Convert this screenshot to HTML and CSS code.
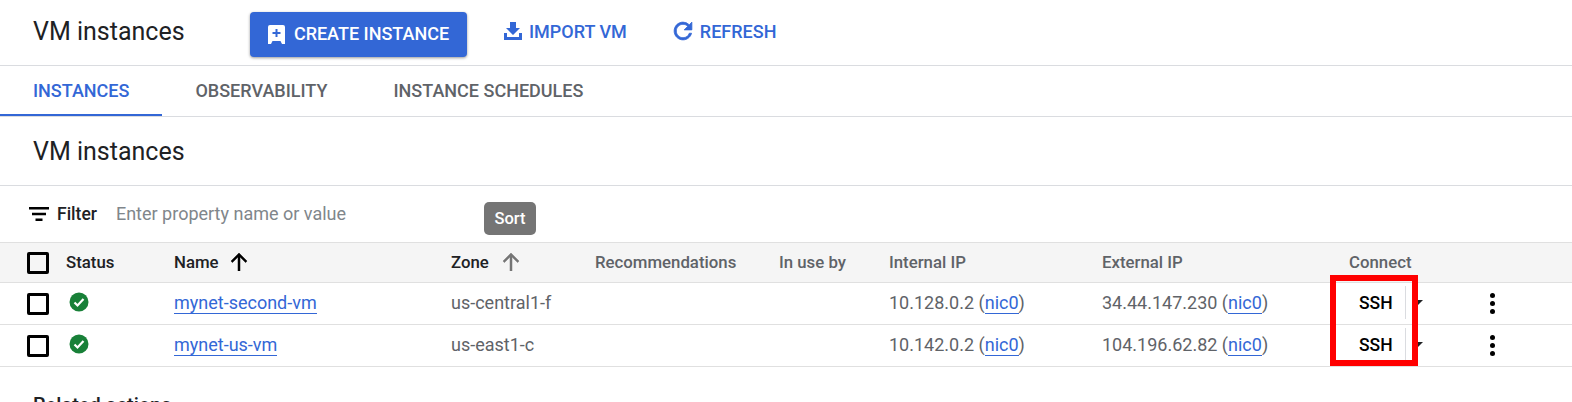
FILE: index.html
```html
<!DOCTYPE html>
<html lang="en">
<head>
  <meta charset="UTF-8">
  <title>VM instances</title>
  <link rel="stylesheet" href="styles.css">
</head>
<body>
  <div class="topbar">
    <h1 class="page-title">VM instances</h1>
    <button class="btn-primary">
      <svg viewBox="0 0 17 19" width="17" height="19"><path fill="#fff" fill-rule="evenodd" d="M2 0h13a2 2 0 0 1 2 2v17h-3l-1.500-3h-8L3 19H0V2a2 2 0 0 1 2-2zM7.500 4v3h-3v2h3v3h2V9h3V7h-3V4z"/></svg>
      <span class="btn-label">CREATE INSTANCE</span>
    </button>
    <a class="btn-text btn-import">
      <svg viewBox="0 0 18 18" width="18" height="18"><path fill="#3367d6" d="M6 0h6v6h4l-7 7-7-7h4zM0 11h3v4h12v-4h3v7H0z"/></svg>
      IMPORT VM
    </a>
    <a class="btn-text">
      <svg viewBox="3 3 18 18" width="20" height="20"><path fill="#3367d6" stroke="#3367d6" stroke-width="0.700" d="M17.650 6.350A7.958 7.958 0 0 0 12 4c-4.420 0-7.990 3.580-7.990 8s3.570 8 7.990 8c3.730 0 6.840-2.550 7.730-6h-2.080A5.990 5.990 0 0 1 12 18c-3.310 0-6-2.690-6-6s2.690-6 6-6c1.660 0 3.140.690 4.220 1.780L13 11h7V4l-2.350 2.350z"/></svg>
      REFRESH
    </a>
  </div>

  <div class="tabs">
    <a class="tab tab-active">INSTANCES</a>
    <a class="tab">OBSERVABILITY</a>
    <a class="tab">INSTANCE SCHEDULES</a>
  </div>

  <h2 class="section-title">VM instances</h2>

  <div class="filter-row">
    <svg viewBox="0 0 20 14" width="20" height="14"><path fill="#000" d="M0 0h20v2.600H0zM3 5.700h14v2.600H3zM6.500 11.400h7V14h-7z"/></svg>
    <span class="filter-label">Filter</span>
    <span class="filter-hint">Enter property name or value</span>
  </div>

  <div class="table-wrap">
    <div class="row row-head">
      <span class="checkbox"></span>
      <span class="head-dark">Status</span>
      <span class="head-dark sort">Name
        <svg viewBox="0 0 18 18" width="18" height="18"><path fill="#000" stroke="#000" stroke-width="0.500" d="M8 18V4L2.400 9.600 1 8l8-8 8 8-1.400 1.600L10 4v14z"/></svg>
      </span>
      <span class="head-dark sort sort-zone">Zone
        <svg viewBox="0 0 18 18" width="18" height="18"><path fill="#757575" stroke="#757575" stroke-width="0.500" d="M8 18V4L2.400 9.600 1 8l8-8 8 8-1.400 1.600L10 4v14z"/></svg>
      </span>
      <span>Recommendations</span>
      <span>In use by</span>
      <span>Internal IP</span>
      <span>External IP</span>
      <span>Connect</span>
      <span></span>
    </div>

    <div class="row">
      <span class="checkbox"></span>
      <svg class="status-ok" viewBox="0 0 20 20" width="20" height="20"><circle cx="10" cy="10" r="9.500" fill="#188038"/><path fill="none" stroke="#fff" stroke-width="2.200" d="M5.500 10.500l3 3 6-6.500"/></svg>
      <span><a class="link">mynet-second-vm</a></span>
      <span>us-central1-f</span>
      <span></span>
      <span></span>
      <span>10.128.0.2 (<a class="link">nic0</a>)</span>
      <span>34.44.147.230 (<a class="link">nic0</a>)</span>
      <div class="connect"><span class="ssh">SSH</span><span class="caret"></span></div>
      <span class="kebab"><i></i><i></i><i></i></span>
    </div>

    <div class="row">
      <span class="checkbox"></span>
      <svg class="status-ok" viewBox="0 0 20 20" width="20" height="20"><circle cx="10" cy="10" r="9.500" fill="#188038"/><path fill="none" stroke="#fff" stroke-width="2.200" d="M5.500 10.500l3 3 6-6.500"/></svg>
      <span><a class="link">mynet-us-vm</a></span>
      <span>us-east1-c</span>
      <span></span>
      <span></span>
      <span>10.142.0.2 (<a class="link">nic0</a>)</span>
      <span>104.196.62.82 (<a class="link">nic0</a>)</span>
      <div class="connect"><span class="ssh">SSH</span><span class="caret"></span></div>
      <span class="kebab"><i></i><i></i><i></i></span>
    </div>

    <div class="tooltip">Sort</div>
    <div class="highlight"></div>
  </div>

  <h3 class="related">Related actions</h3>
</body>
</html>
```

FILE: styles.css
```css
* { box-sizing: border-box; }
html, body { height: 402px; overflow: hidden; }
body { margin: 0; background: #fff; font-family: Roboto, "Liberation Sans", sans-serif; color: #5f6368; }

.topbar { height: 66px; display: flex; align-items: center; padding-left: 33px; border-bottom: 1px solid #dadce0; }
.page-title { margin: -3px 67px 0 0; width: 150px; font-size: 25px; font-weight: 400; color: #202124; white-space: nowrap; }
.btn-primary { width: 217px; height: 45px; margin: 3px 37px 0 0; display: flex; align-items: center; justify-content: center; gap: 9px; background: #3367d6; color: #fff; border: none; border-radius: 4px; font: 500 18px Roboto, sans-serif; white-space: nowrap; padding: 0; box-shadow: 0 1px 3px rgba(0,0,0,0.4); }
.btn-label { margin-top: -2px; }
.btn-text { display: flex; align-items: center; gap: 7px; color: #3367d6; font-size: 18px; font-weight: 500; margin-top: -3px; }
.btn-import { margin-right: 46px; }

.tabs { height: 51px; display: flex; border-bottom: 1px solid #dadce0; }
.tab { display: flex; align-items: center; padding: 0 33px 2px; font-size: 18px; font-weight: 500; height: 50px; color: #5f6368; }
.tab-active { color: #3367d6; border-bottom: 2px solid #3367d6; padding-bottom: 0; }

.section-title { margin: 0; height: 69px; display: flex; align-items: center; padding: 0 33px; font-size: 25px; font-weight: 400; color: #202124; border-bottom: 1px solid #dadce0; }

.filter-row { height: 56px; display: flex; align-items: center; padding-left: 29px; }
.filter-label { margin-left: 8px; font-size: 17.500px; font-weight: 500; color: #202124; }
.filter-hint { margin: -2px 0 0 19px; font-size: 18px; color: #80868b; }

.table-wrap { position: relative; }
.row { height: 42px; padding: 0 0 2px 27px; display: grid; grid-template-columns: 39px 108px 277px 144px 184px 110px 213px 247px 141px 40px; align-items: center; border-bottom: 1px solid #e0e0e0; font-size: 18px; }
.row-head { height: 41px; background: #f5f5f5; border-top: 1px solid #e0e0e0; font-weight: 500; font-size: 16.800px; }
.head-dark { color: #202124; }
.sort { display: flex; align-items: center; gap: 11px; }
.sort-zone { gap: 13px; }

.checkbox { width: 22px; height: 22px; margin-top: 2px; border: 3px solid #000; border-radius: 2px; }
.status-ok { margin-left: 3px; margin-top: -1px; }
.link { color: #3367d6; border-bottom: 1px solid #3367d6; }

.connect { display: flex; align-items: center; margin-left: 10px; }
.ssh { width: 47px; height: 33px; display: flex; align-items: center; color: #000; font-size: 17.500px; font-weight: 500; border-right: 1px solid #dadce0; }
.caret { margin-left: 7px; width: 0; height: 0; border-left: 5px solid transparent; border-right: 5px solid transparent; border-top: 5px solid #202124; }
.kebab { display: flex; flex-direction: column; gap: 3px; align-items: center; width: 5px; margin-top: 2px; }
.kebab i { width: 5px; height: 5px; border-radius: 50%; background: #000; }

.tooltip { position: absolute; left: 484px; top: -40px; width: 52px; height: 33px; display: flex; align-items: center; justify-content: center; background: #757575; color: #fff; border-radius: 5px; font-size: 16.500px; font-weight: 500; }
.highlight { position: absolute; left: 1330px; top: 33px; width: 88px; height: 91px; border: 6px solid #f00; }

.related { margin: 26px 0 0 33px; font-size: 20px; font-weight: 500; color: #202124; white-space: nowrap; }
```
